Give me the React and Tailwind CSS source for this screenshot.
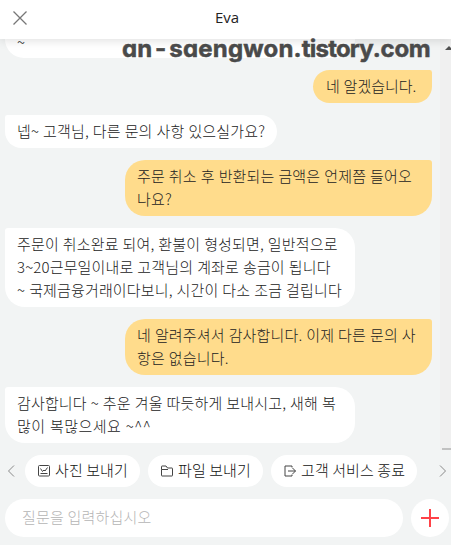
const base = "text-[15px] leading-[23px] tracking-[0.15px] [word-spacing:0.5px] text-[#222] font-light whitespace-pre";

function Bubble({ me, className, lines }) {
  const side = me
    ? "self-end bg-[#ffdc8c] rounded-[20px] rounded-tr-[3px]"
    : "self-start bg-white rounded-[20px] rounded-tl-[3px]";
  return (
    <div className={`${base} ${side} shrink-0 px-3 pb-1.5 pt-1 ${className}`}>
      {lines.map(([text, spacing]) => (
        <div key={text} className={spacing}>{text}</div>
      ))}
    </div>
  );
}

function Pill({ className, icon, children }) {
  return (
    <button className={`flex h-8 shrink-0 items-center rounded-full bg-white pl-[13px] text-[15px] font-light tracking-[0.1px] text-[#111] whitespace-pre ${className}`}>
      <svg width="12" height="12" viewBox="0 0 12 12" fill="none" stroke="#444" strokeWidth="1" className="mr-[5px] shrink-0">{icon}</svg>
      <span className="pb-0.5">{children}</span>
    </button>
  );
}

export default function App() {
  return (
    <div className="relative flex h-[545px] w-[451px] flex-col overflow-hidden bg-[#f2f4f4] font-['Noto_Sans_CJK_KR',sans-serif]">
      <header className="relative z-10 flex h-[39px] shrink-0 items-center bg-white pb-[3px] shadow-[0_1px_10px_rgba(0,0,0,0.14)]">
        <svg width="14" height="14" viewBox="0 0 14 14" stroke="#777" strokeWidth="1.3" className="ml-[13px] shrink-0"><path d="M.5.5l13 13M13.5.5l-13 13" /></svg>
        <h1 className="ml-[188px] pb-0.5 font-['Open_Sans',sans-serif] text-[15px] text-[#222]">Eva</h1>
      </header>
      <div className="flex h-[411px] shrink-0">
        <main className="flex w-[440px] flex-col gap-3 pl-[5px] pr-2">
          <div className={`${base} h-[19px] w-[350px] shrink-0 rounded-b-[20px] bg-white px-3`}>
            <div className="leading-[6px]">~</div>
          </div>
          <Bubble me className="w-[119px] pl-[13px]" lines={[["네 알겠습니다.", "tracking-normal"]]} />
          <Bubble className="w-[272px]" lines={[["넵~ 고객님, 다른 문의 사항 있으실가요?", ""]]} />
          <Bubble me className="w-[307px]" lines={[["주문 취소 후 반환되는 금액은 언제쯤 들어오", ""], ["나요?", ""]]} />
          <Bubble className="w-[350px]" lines={[["주문이 취소완료 되여, 환불이 형성되면, 일반적으로", ""], ["3~20근무일이내로 고객님의 계좌로 송금이 됩니다", ""], ["~ 국제금융거래이다보니, 시간이 다소 조금 걸립니다", ""]]} />
          <Bubble me className="w-[307px]" lines={[["네 알려주셔서 감사합니다. 이제 다른 문의 사", ""], ["항은 없습니다.", ""]]} />
          <Bubble className="w-[350px]" lines={[["감사합니다 ~ 추운 겨울 따듯하게 보내시고, 새해 복", ""], ["많이 복많으세요 ~^^", "tracking-[0.5px]"]]} />
        </main>
        <aside className="flex w-[11px] flex-col items-end justify-between bg-[#f0f0f0]">
          <svg width="6" height="4" className="mt-[7px]"><path d="M0 4L4 0L8 4Z" fill="#505050" /></svg>
          <div className="h-0.5 w-[9px] bg-[#c1c1c1]" />
        </aside>
      </div>
      <nav className="mt-[5px] flex h-8 shrink-0 items-center">
        <svg width="8" height="12" viewBox="0 0 8 12" fill="none" stroke="#888" className="ml-[7px] mr-[10px]"><path d="M7 .5L1.5 6L7 11.5" /></svg>
        <Pill className="w-[115px]" icon={<><rect x=".5" y=".5" width="11" height="10.5" rx="1" /><path d="M2.5 3.5l2 3L6 5l1 1 2.5-3.5M2.5 8.5h7" /></>}>사진 보내기</Pill>
        <Pill className="ml-2 w-[115px]" icon={<path d="M.5 4.5v6q0 .5.5.5h10q.5 0 .5-.5v-7q0-.5-.5-.5H6.5L5 1H1Q.5 1 .5 1.5V4.5H7" />}>파일 보내기</Pill>
        <Pill className="ml-2 w-[146px]" icon={<path d="M8 2.5V1H1v10h7V9.5M4 6h7.5M8.5 3l3 3-3 3" />}>고객 서비스 종료</Pill>
        <svg width="8" height="12" viewBox="0 0 8 12" fill="none" stroke="#888" className="ml-[22px]"><path d="M1 .5L6.5 6L1 11.5" /></svg>
      </nav>
      <footer className="mt-3 flex h-[38px] shrink-0 gap-2 pl-[5px]">
        <div className="flex w-[398px] items-center rounded-full bg-white pb-px pl-[17px] text-[15px] font-light tracking-[0.2px] text-[#b5b5b5]">질문을 입력하십시오</div>
        <button className="flex size-[38px] items-center justify-center rounded-full bg-white">
          <svg width="18" height="18" stroke="#ff4248" strokeWidth="2"><path d="M0 9H18M9 0V18" /></svg>
        </button>
      </footer>
      <div className="absolute left-[122px] top-[34px] z-20 whitespace-nowrap font-['Inter',sans-serif] text-[24px] font-bold leading-[30px] text-[#4a4a4a] [font-feature-settings:'cv11'] [-webkit-text-stroke:0.5px_#4a4a4a]">
        <span>an</span>
        <span className="mx-[3px]">-</span>
        <span className="tracking-[0.2px]">saengwon.</span>
        <span className="tracking-[-0.8px]">tistory</span>
        <span className="tracking-[-0.3px]">.com</span>
      </div>
    </div>
  );
}
